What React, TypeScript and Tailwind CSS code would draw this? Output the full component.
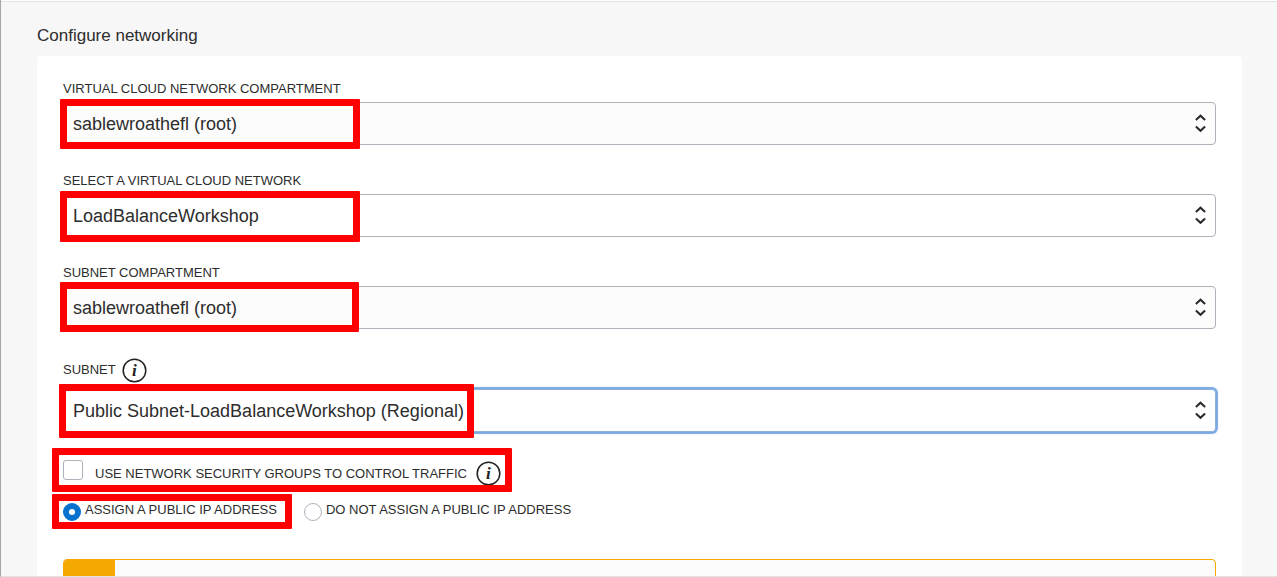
import { useState, type ReactNode } from "react";

function Highlight({ className }: { className: string }) {
  return (
    <span
      aria-hidden="true"
      className={`pointer-events-none absolute rounded-[1px] border-[7px] border-[#ff0000] ${className}`}
    />
  );
}

function InfoButton({ label }: { label: string }) {
  return (
    <button type="button" aria-label={label} className="size-[25px] shrink-0 rounded-full">
      <svg aria-hidden="true" viewBox="0 0 25 25" className="block size-full">
        <circle cx="12.5" cy="12.5" r="11.3" fill="#fff" stroke="#222" strokeWidth="1.5" />
        <text
          x="12.3"
          y="18"
          textAnchor="middle"
          fill="#222"
          className="font-['Liberation_Serif',serif] text-[17px] font-bold italic"
        >
          i
        </text>
      </svg>
    </button>
  );
}

function Chevrons() {
  return (
    <svg
      aria-hidden="true"
      viewBox="0 0 12 20"
      className="pointer-events-none absolute top-3 right-[9px] h-5 w-3"
      fill="none"
      stroke="#2b2b2b"
      strokeWidth="2.1"
    >
      <path d="M0.9 6.1 5.5 1.7 10.1 6.1" />
      <path d="M0.9 12.4 5.5 16.8 10.1 12.4" />
    </svg>
  );
}

interface FieldProps {
  id: string;
  label: string;
  value: string;
  tone?: string;
  info?: ReactNode;
  highlight: string;
}

function SelectField({ id, label, value, tone = "border-[#aeb2bb] bg-white", info, highlight }: FieldProps) {
  return (
    <div className="flex flex-col gap-[5px]">
      <div className={`flex items-center gap-1.5 ${info ? "h-7" : "h-[17px]"}`}>
        <label htmlFor={id} className="text-[13px] leading-4">
          {label}
        </label>
        {info}
      </div>
      <div className="relative">
        <select
          id={id}
          defaultValue={value}
          className={`block h-[43px] w-full appearance-none rounded-[4px] border pr-8 pl-[9px] text-lg outline-none ${tone}`}
        >
          <option>{value}</option>
        </select>
        <Chevrons />
        <Highlight className={highlight} />
      </div>
    </div>
  );
}

const radioStyle =
  "mt-[3px] size-[18px] shrink-0 appearance-none rounded-full border border-[#aeb2bb] bg-white checked:border-[6px] checked:border-[#0572ce]";

export default function App() {
  const [assign, setAssign] = useState(true);
  const [useGroups, setUseGroups] = useState(false);

  return (
    <main className="flex h-screen flex-col overflow-hidden border-b border-l border-b-[#e2e2e2] border-l-[#a6a6a6] bg-[#f7f7f7] font-['Liberation_Sans',Arial,sans-serif] text-[#2d2d2d]">
      <div className="h-px shrink-0 bg-white" />
      <div className="min-h-0 grow overflow-hidden border-t border-[#e2e2e2] pt-[22px] pr-[35px] pl-9">
        <h1 className="text-[17px] leading-6">Configure networking</h1>
        <form className="mt-2 rounded-t-[4px] bg-white px-[26px] pt-6">
          <div className="flex flex-col gap-[27px]">
            <SelectField
              id="vcn-compartment"
              label="VIRTUAL CLOUD NETWORK COMPARTMENT"
              value="sablewroathefl (root)"
              tone="border-[#aeb2bb] bg-[#fcfcfc]"
              highlight="-top-[3px] -left-[3px] h-[50px] w-[300px]"
            />
            <SelectField
              id="vcn"
              label="SELECT A VIRTUAL CLOUD NETWORK"
              value="LoadBalanceWorkshop"
              highlight="-top-[3px] -left-[3px] h-[51px] w-[300px]"
            />
            <SelectField
              id="subnet-compartment"
              label="SUBNET COMPARTMENT"
              value="sablewroathefl (root)"
              tone="border-[#aeb2bb] bg-[#fcfcfc]"
              highlight="-top-1 -left-[3px] h-[50px] w-[299px]"
            />
            <SelectField
              id="subnet"
              label="SUBNET"
              value="Public Subnet-LoadBalanceWorkshop (Regional)"
              tone="border-[#8fb0dc] bg-white shadow-[0_0_1px_2px_#78a8e2]"
              info={<InfoButton label="About subnets" />}
              highlight="-top-[5px] -left-1 h-[54px] w-[415px]"
            />
          </div>

          <div className="relative mt-7 flex h-[26px] w-fit items-start">
            <input
              id="nsg"
              type="checkbox"
              checked={useGroups}
              onChange={(e) => setUseGroups(e.target.checked)}
              className="size-5 shrink-0 appearance-none rounded-[3px] border border-[#aeb2bb] bg-white checked:bg-[#0572ce]"
            />
            <div className="ml-3 flex items-center gap-[9px] pt-px">
              <label htmlFor="nsg" className="text-[13px] leading-4">
                USE NETWORK SECURITY GROUPS TO CONTROL TRAFFIC
              </label>
              <InfoButton label="About network security groups" />
            </div>
            <Highlight className="-top-3 -right-[11px] -left-[11px] h-11" />
          </div>

          <div role="radiogroup" aria-label="Public IP address" className="mt-[14px] flex h-6 gap-[27px]">
            <div className="relative flex gap-1">
              <input
                id="assign-ip"
                type="radio"
                name="public-ip"
                checked={assign}
                onChange={() => setAssign(true)}
                className={radioStyle}
              />
              <label htmlFor="assign-ip" className="pt-0.5 text-[13px] leading-4">
                ASSIGN A PUBLIC IP ADDRESS
              </label>
              <Highlight className="-top-[6px] -right-[15px] -left-[11px] h-[35px]" />
            </div>
            <div className="flex gap-1">
              <input
                id="no-assign-ip"
                type="radio"
                name="public-ip"
                checked={!assign}
                onChange={() => setAssign(false)}
                className={radioStyle}
              />
              <label htmlFor="no-assign-ip" className="pt-0.5 text-[13px] leading-4">
                DO NOT ASSIGN A PUBLIC IP ADDRESS
              </label>
            </div>
          </div>

          <div className="mt-[35px] flex h-16 overflow-hidden rounded-[4px] border border-[#f5a800] bg-[#fcfcfc]">
            <div className="w-[51px] bg-[#f5a800]" />
          </div>
        </form>
      </div>
    </main>
  );
}
